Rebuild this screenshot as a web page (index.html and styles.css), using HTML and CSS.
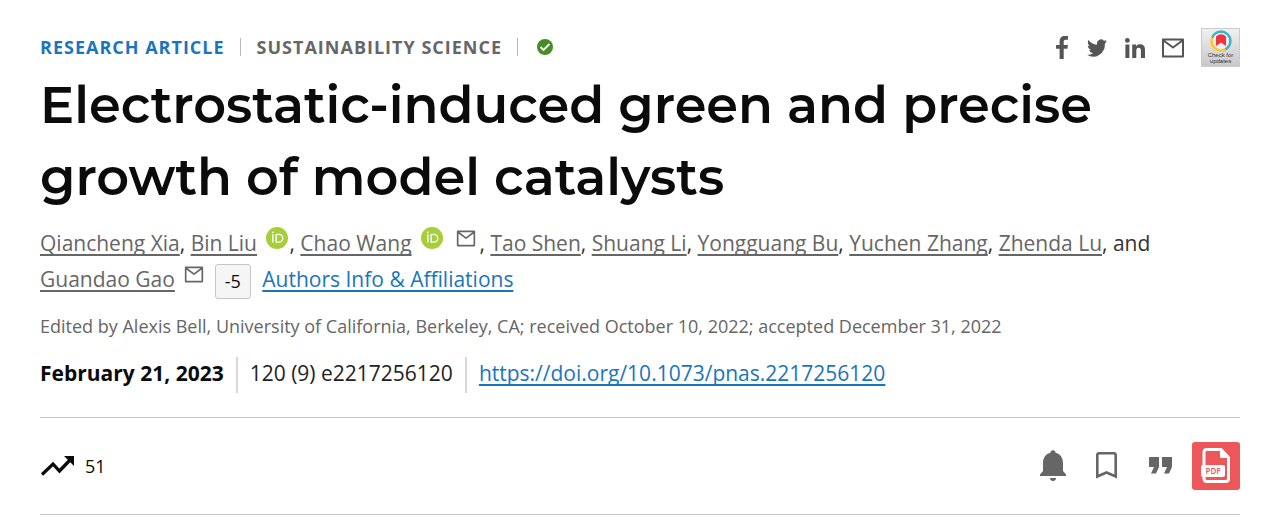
FILE: index.html
```html
<!DOCTYPE html>
<html lang="en">
<head>
<meta charset="utf-8">
<title>Electrostatic-induced green and precise growth of model catalysts</title>
<link rel="stylesheet" href="styles.css">
</head>
<body>
<svg class="sprite" aria-hidden="true">
  <symbol id="mail" viewBox="0 0 24 20"><path d="M2 1.500h20v17H2zM2.500 2.500L12 9.500l9.500-7" fill="none" stroke="currentColor" stroke-width="2" stroke-linejoin="round"/></symbol>
  <symbol id="orcid" viewBox="0 0 24 24"><circle cx="12" cy="12" r="12" fill="#a6ce39"/><g fill="none" stroke="#fff" stroke-width="1.500"><path d="M7.500 8v9M11 8h3a4 4 0 0 1 0 8.500h-3z"/></g><circle cx="7.500" cy="5.800" r="1" fill="#fff"/></symbol>
</svg>
<main class="article">
  <header class="topline">
    <div class="meta">
      <a class="type" href="#">RESEARCH ARTICLE</a>
      <span class="bar"></span>
      <span class="topic">SUSTAINABILITY SCIENCE</span>
      <span class="bar"></span>
      <svg class="check" viewBox="0 0 16 16" role="img" aria-label="Free access"><circle cx="8" cy="8" r="8" fill="#478d27"/><path d="M3.500 8l3 3 6-6" fill="none" stroke="#fff" stroke-width="1.800"/></svg>
    </div>
    <nav class="share" aria-label="Share">
      <a href="#" aria-label="Facebook"><svg class="fb" viewBox="0 0 12 23"><path d="M3.600 23V12.800H0V8.900h3.600V5.500C3.600 2 5.600 0 8.800 0H12v3.800H9.800C8.200 3.800 7.700 4.600 7.700 6v2.900H12l-.6 3.900H7.700V23z" fill="currentColor"/></svg></a>
      <a href="#" aria-label="Twitter"><svg class="tw" viewBox="0 2 24 20" preserveAspectRatio="none"><path d="M24 4.600c-.9.400-1.800.7-2.800.8 1-.6 1.800-1.600 2.200-2.700-1 .6-2 1-3.100 1.200A4.900 4.900 0 0 0 12 8.400C7.700 8.200 4.100 6.100 1.700 3.100.4 5.300 1 8.300 3.200 9.700c-.8 0-1.600-.2-2.200-.6 0 2.300 1.600 4.400 3.900 4.900-.7.200-1.500.2-2.200.1.600 2 2.400 3.400 4.600 3.400A9.900 9.900 0 0 1 0 19.500 14 14 0 0 0 21.500 7.100c1-.7 1.800-1.600 2.500-2.500z" fill="currentColor"/></svg></a>
      <a href="#" aria-label="LinkedIn"><svg class="li" viewBox="0 0 20 20"><path d="M.4 6.600h4V20h-4zM7.200 6.600H11v1.800c.7-1.200 2-2.100 4-2.100 4 0 5 2.500 5 6V20h-4.100v-6.900c0-1.900-.3-3.400-2.200-3.400S11.300 11 11.300 13v7H7.200z" fill="currentColor"/><circle cx="2.400" cy="2.400" r="2.400" fill="currentColor"/></svg></a>
      <a href="#" aria-label="Email"><svg class="em"><use href="#mail"/></svg></a>
      <button class="crossmark" aria-label="Check for updates">
        <svg class="mark" viewBox="0 0 22 22"><g fill="none" stroke-width="2.600"><path d="M2.200 8a9.300 9.300 0 1 1 13 11.300" stroke="#3eb1c8"/><path d="M2.200 8a9.300 9.300 0 0 0 13 11.300" stroke="#ffc72c"/></g><circle cx="11" cy="11" r="8" fill="#eee"/><path d="M6 6.500Q11 2 16 6.500v9.500L11 12.500 6 16z" fill="#ef3340"/></svg>
        <span>Check for<br>updates</span>
      </button>
    </nav>
  </header>
  <h1>Electrostatic-induced green and precise growth of model catalysts</h1>
  <div class="authors"><a href="#">Qiancheng Xia</a>, <a href="#">Bin Liu</a> <a class="badge" href="#" aria-label="ORCID"><svg class="orcid"><use href="#orcid"/></svg></a>, <a href="#">Chao Wang</a> <a class="badge" href="#" aria-label="ORCID"><svg class="orcid"><use href="#orcid"/></svg></a> <a class="badge mail-badge" href="#" aria-label="Email author"><svg class="mail"><use href="#mail"/></svg></a>, <a href="#">Tao Shen</a>, <a href="#">Shuang Li</a>, <a href="#">Yongguang Bu</a>, <a href="#">Yuchen Zhang</a>, <a href="#">Zhenda Lu</a>, and <a href="#">Guandao Gao</a> <a class="badge" href="#" aria-label="Email author"><svg class="mail"><use href="#mail"/></svg></a> <button class="less">-5</button> <a class="info" href="#">Authors Info &amp; Affiliations</a></div>
  <p class="edited">Edited by Alexis Bell, University of California, Berkeley, CA; received October 10, 2022; accepted December 31, 2022</p>
  <div class="issue">
    <span class="date">February 21, 2023</span>
    <span class="cite">120 (9) e2217256120</span>
    <a class="doi" href="#">https://doi.org/10.1073/pnas.2217256120</a>
  </div>
  <footer class="tools">
    <a class="metrics" href="#"><svg class="trend" viewBox="0 0 34 20"><path d="M1 18.500L12 8l6.500 7L29 4" fill="none" stroke="#0b0b0b" stroke-width="3.300"/><path d="M23 0h10v10z" fill="#0b0b0b"/></svg><span>51</span></a>
    <div class="actions">
      <button aria-label="Alerts"><svg class="bell" viewBox="0 0 26 31"><path d="M0 26v-1.500l3-3.500v-8C3 7.500 5.800 4 10.500 2.800a2.500 2.500 0 0 1 5 0C20.200 4 23 7.500 23 13v8l3 3.500V26zM10 28h6a3 3 0 0 1-6 0z" fill="currentColor"/></svg></button>
      <button aria-label="Bookmark"><svg class="bookmark" viewBox="0 0 21 27"><path d="M1.300 24.500V3.300q0-2 2-2h14.400q2 0 2 2v21.200L10.500 20.500z" fill="none" stroke="currentColor" stroke-width="2.600"/></svg></button>
      <button aria-label="Cite"><svg class="quote" viewBox="0 0 24 17"><path d="M0 0h10v10L7 16.500H2L5 10H0zM13 0h10v10l-3 6.500h-5l3-6.500h-5z" fill="currentColor"/></svg></button>
      <a class="pdf" href="#" aria-label="View PDF"><svg viewBox="0 0 48 48"><path d="M12 22V10q0-2.500 3-2.500h14l7.500 8V37q0 2.500-3 2.500H15q-3 0-3-3z" fill="none" stroke="#fff" stroke-width="3"/><path d="M28 7v9h9z" fill="#fff"/><rect x="9" y="23" width="24" height="12" rx="2" fill="#fff"/><text class="pdf-label" x="21" y="32" text-anchor="middle">PDF</text></svg></a>
    </div>
  </footer>
</main>
</body>
</html>
```

FILE: styles.css
```css
* { box-sizing: border-box; }
body { margin: 0; background: #fff; color: #0b0b0b; font-family: "Open Sans", "Noto Sans", sans-serif; }
a { color: inherit; }
button { font: inherit; color: inherit; border: 0; padding: 0; background: none; }
svg { display: block; }
.sprite { display: none; }
.article { padding: 28px 46px 0 40px; }
.topline { display: flex; justify-content: space-between; align-items: center; height: 39px; }
.meta { display: flex; align-items: center; gap: 16px; font-size: 18px; line-height: 24px; font-weight: 700; letter-spacing: 1px; color: #666; padding-bottom: 1px; }
.type { color: #1b75bc; text-decoration: none; }
.bar { width: 1px; height: 18px; margin-left: -1px; background: #b8b8b8; }
.check { width: 16px; height: 16px; margin-left: 3px; }
.share { display: flex; align-items: center; gap: 16px; color: #555; }
.fb { width: 12px; height: 23px; margin-right: 3px; }
.tw { width: 20px; height: 18px; }
.li { width: 20px; height: 20px; margin-left: 2px; }
.em { width: 24px; height: 20px; }
.crossmark { width: 39px; height: 39px; border: 1px solid #ccc; background: linear-gradient(#f0f0f0, #c8c8c8); display: flex; flex-direction: column; align-items: center; font-size: 6px; line-height: 6px; font-family: "Liberation Sans", sans-serif; color: #333; }
.mark { width: 22px; height: 22px; margin-top: 1px; }
h1 { margin: 2px 0 0; font: 600 51px/72px Montserrat, Inter, sans-serif; }
.authors { margin-top: 12px; font-size: 21px; line-height: 36px; color: #333; }
.authors a { color: #666; text-decoration-thickness: 2px; text-underline-offset: 3px; text-decoration-skip-ink: none; }
.authors a.info { color: #1b75bc; margin-left: 6px; }
.badge { display: inline-block; vertical-align: 2px; margin: 0 1px 0 4px; }
.authors .mail-badge { margin: 0 4px 0 6px; }
.orcid { width: 22px; height: 22px; }
.mail { width: 20px; height: 17px; margin-bottom: 2px; }
.less { width: 36px; height: 35px; margin-left: 4px; border: 1px solid #c6c6c6; border-radius: 3px; background: #f5f5f5; color: #0b0b0b; font-size: 18px; line-height: 33px; vertical-align: middle; }
.edited { margin: 14px 0 0; font-size: 18px; line-height: 26px; color: #666; }
.issue { display: flex; margin-top: 18px; font-size: 21px; line-height: 32px; padding-bottom: 24px; border-bottom: 1px solid #c6c6c6; }
.date { font-weight: 700; padding-right: 12px; }
.cite, .doi { border-left: 2px solid #d8d8d8; padding: 0 12px 4px; }
.cite { color: #222; }
.doi { color: #1b75bc; text-decoration-thickness: 2px; text-underline-offset: 3px; text-decoration-skip-ink: none; }
.tools { display: flex; justify-content: space-between; align-items: center; padding: 24px 0; border-bottom: 1px solid #c6c6c6; }
.metrics { display: flex; align-items: center; gap: 10px; padding-left: 1px; font-size: 18px; text-decoration: none; }
.trend { width: 34px; height: 20px; }
.actions { display: flex; align-items: center; color: #666; }
.actions button { margin-right: 30px; }
.actions button:nth-child(2) { margin-right: 32px; }
.actions button:nth-child(3) { margin-right: 19px; }
.bell { width: 26px; height: 31px; }
.bookmark { width: 21px; height: 27px; }
.quote { width: 24px; height: 17px; }
.pdf { width: 48px; height: 48px; border-radius: 3px; background: #ed5759; }
.pdf-label { font: 600 8px "Open Sans", sans-serif; fill: #ed5759; }
```
